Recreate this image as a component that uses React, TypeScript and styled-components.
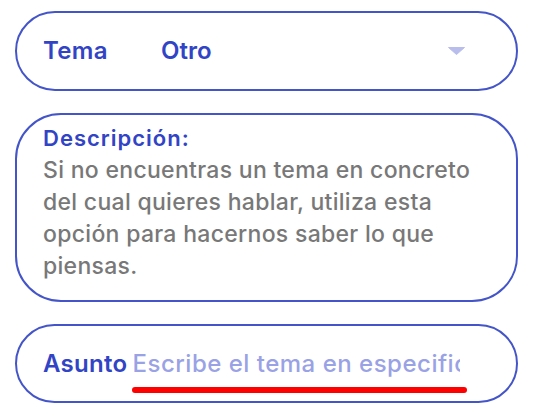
import React from "react";
import styled, { createGlobalStyle } from "styled-components";

const GlobalStyle = createGlobalStyle`
  html, body {
    margin: 0;
    padding: 0;
    background: #ffffff;
  }
  body {
    font-family: Inter, "Noto Sans", "Liberation Sans", sans-serif;
    -webkit-font-smoothing: antialiased;
  }
`;

const BLUE = "#3244c6";
const BORDER = "#4355c8";

const Page = styled.div`
  display: flex;
  flex-direction: column;
  gap: 22px;
  padding: 11px 24px 0 15px;
  width: 542px;
  box-sizing: border-box;
`;

const Pill = styled.div`
  box-sizing: border-box;
  height: 80px;
  border: 2px solid ${BORDER};
  border-radius: 40px;
  padding: 0 30px 0 26px;
  display: flex;
  align-items: center;
`;

const SelectRow = styled(Pill)`
  display: grid;
  grid-template-columns: 118px 1fr auto;
  align-items: center;
  cursor: pointer;
`;

const Label = styled.span`
  font-size: 24px;
  font-weight: 600;
  color: ${BLUE};
  letter-spacing: 0.3px;
  line-height: 30px;
`;

const Value = styled.span`
  font-size: 24px;
  font-weight: 600;
  color: ${BLUE};
  line-height: 30px;
`;

const Caret = styled.svg`
  width: 17px;
  height: 8px;
  display: block;
  margin-right: 21px;
  margin-bottom: 1px;
`;

const DescriptionCard = styled.div`
  box-sizing: border-box;
  height: 189px;
  border: 2px solid ${BORDER};
  border-radius: 46px;
  padding: 7px 26px 0 26px;
  display: flex;
  flex-direction: column;
`;

const DescTitle = styled.div`
  font-size: 22px;
  font-weight: 600;
  color: ${BLUE};
  line-height: 32px;
  letter-spacing: 1px;
`;

const DescBody = styled.p`
  margin: 0;
  font-size: 23px;
  font-weight: 500;
  color: #787878;
  line-height: 32px;
  letter-spacing: 0.3px;
`;

const InputRow = styled(Pill)`
  height: 79px;
  gap: 5px;
`;

const InputWrap = styled.div`
  position: relative;
  display: flex;
  &::after {
    content: "";
    position: absolute;
    left: -1px;
    right: -7px;
    top: calc(100% + 8px);
    height: 6px;
    border-radius: 3px;
    background: #ff0000;
  }
`;

const TextInput = styled.input`
  width: 327px;
  border: none;
  outline: none;
  padding: 0;
  margin: 0;
  background: transparent;
  font-family: Inter, "Noto Sans", "Liberation Sans", sans-serif;
  font-size: 24px;
  font-weight: 500;
  letter-spacing: 0.5px;
  line-height: 30px;
  height: 30px;
  color: ${BLUE};
  &::placeholder {
    color: #9aa2e6;
    opacity: 1;
  }
`;

export default function App() {
  return (
    <>
      <GlobalStyle />
      <Page>
        <SelectRow>
          <Label>Tema</Label>
          <Value>Otro</Value>
          <Caret viewBox="0 0 17 8">
            <path d="M0.5 0.5 H16.5 L8.5 7.5 Z" fill="#b9bdeb" stroke="#b9bdeb" strokeLinejoin="round" />
          </Caret>
        </SelectRow>
        <DescriptionCard>
          <DescTitle>Descripción:</DescTitle>
          <DescBody>
            Si no encuentras un tema en concreto del cual quieres hablar, utiliza esta opción para hacernos saber lo que piensas.
          </DescBody>
        </DescriptionCard>
        <InputRow>
          <Label>Asunto</Label>
          <InputWrap>
            <TextInput placeholder="Escribe el tema en especifico" />
          </InputWrap>
        </InputRow>
      </Page>
    </>
  );
}
